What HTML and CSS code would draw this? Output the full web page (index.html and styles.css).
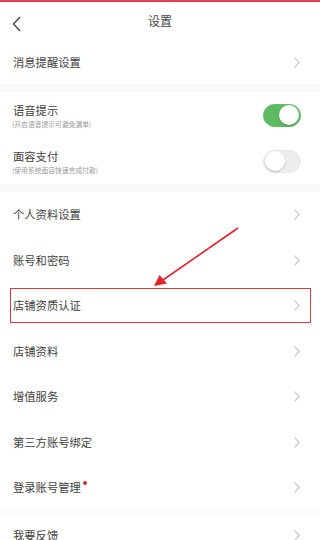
FILE: index.html
```html
<!DOCTYPE html>
<html lang="zh-CN">
<head>
    <meta charset="UTF-8">
    <meta name="viewport" content="width=device-width, initial-scale=1.0">
    <title>设置</title>
    <link rel="stylesheet" href="styles.css">
</head>
<body>
    <!-- Header -->
    <header class="header">
        <span class="back">
            <svg width="9" height="16" viewBox="0 0 9 16"><polyline points="8,1 1.5,8 8,15" fill="none" stroke="#444" stroke-width="1.4"/></svg>
        </span>
        <h1>设置</h1>
    </header>

    <div class="row row-first">
        <span class="label">消息提醒设置</span>
        <svg class="chev" width="6" height="11" viewBox="0 0 6 11"><polyline points="0.7,0.7 5.2,5.5 0.7,10.3" fill="none" stroke="#c4c4c4" stroke-width="1.1"/></svg>
    </div>

    <div class="gap gap-8"></div>

    <!-- Switch rows -->
    <div class="row row-switch">
        <div class="text">
            <span class="label">语音提示</span>
            <span class="sub">(开启语音提示可避免漏单)</span>
        </div>
        <span class="switch on"><span class="knob"></span></span>
    </div>
    <div class="row row-switch">
        <div class="text">
            <span class="label">面容支付</span>
            <span class="sub">(使用系统面容快速完成付款)</span>
        </div>
        <span class="switch"><span class="knob"></span></span>
    </div>

    <div class="gap gap-8"></div>

    <div class="row">
        <span class="label">个人资料设置</span>
        <svg class="chev" width="6" height="11" viewBox="0 0 6 11"><polyline points="0.7,0.7 5.2,5.5 0.7,10.3" fill="none" stroke="#c4c4c4" stroke-width="1.1"/></svg>
    </div>
    <div class="row">
        <span class="label">账号和密码</span>
        <svg class="chev" width="6" height="11" viewBox="0 0 6 11"><polyline points="0.7,0.7 5.2,5.5 0.7,10.3" fill="none" stroke="#c4c4c4" stroke-width="1.1"/></svg>
    </div>
    <div class="row marked">
        <span class="label">店铺资质认证</span>
        <svg class="chev" width="6" height="11" viewBox="0 0 6 11"><polyline points="0.7,0.7 5.2,5.5 0.7,10.3" fill="none" stroke="#c4c4c4" stroke-width="1.1"/></svg>
    </div>
    <div class="row">
        <span class="label">店铺资料</span>
        <svg class="chev" width="6" height="11" viewBox="0 0 6 11"><polyline points="0.7,0.7 5.2,5.5 0.7,10.3" fill="none" stroke="#c4c4c4" stroke-width="1.1"/></svg>
    </div>
    <div class="row">
        <span class="label">增值服务</span>
        <svg class="chev" width="6" height="11" viewBox="0 0 6 11"><polyline points="0.7,0.7 5.2,5.5 0.7,10.3" fill="none" stroke="#c4c4c4" stroke-width="1.1"/></svg>
    </div>
    <div class="row">
        <span class="label">第三方账号绑定</span>
        <svg class="chev" width="6" height="11" viewBox="0 0 6 11"><polyline points="0.7,0.7 5.2,5.5 0.7,10.3" fill="none" stroke="#c4c4c4" stroke-width="1.1"/></svg>
    </div>
    <div class="row">
        <span class="label">登录账号管理<span class="dot"></span></span>
        <svg class="chev" width="6" height="11" viewBox="0 0 6 11"><polyline points="0.7,0.7 5.2,5.5 0.7,10.3" fill="none" stroke="#c4c4c4" stroke-width="1.1"/></svg>
    </div>

    <div class="gap gap-3"></div>

    <div class="row">
        <span class="label">我要反馈</span>
        <svg class="chev" width="6" height="11" viewBox="0 0 6 11"><polyline points="0.7,0.7 5.2,5.5 0.7,10.3" fill="none" stroke="#c4c4c4" stroke-width="1.1"/></svg>
    </div>

    <!-- Annotation arrow -->
    <svg class="arrow" width="320" height="540" viewBox="0 0 320 540">
        <line x1="238" y1="228" x2="163" y2="280" stroke="#e3232c" stroke-width="1.6"/>
        <polygon points="154,286 159.5,275 167,283.5" fill="#e3232c"/>
    </svg>
</body>
</html>
```

FILE: styles.css
```css
/* Reset */
* {
    margin: 0;
    padding: 0;
    box-sizing: border-box;
}

html, body {
    height: 100%;
    overflow: hidden;
}

body {
    font-family: "Noto Sans CJK SC", "Noto Sans", sans-serif;
    background-color: #fff;
    color: #424242;
    position: relative;
    width: 320px;
}

/* Header */
.header {
    height: 40px;
    border-top: 2px solid #e4414d;
    display: flex;
    align-items: center;
    justify-content: center;
    position: relative;
}

.header h1 {
    font-size: 12px;
    font-weight: 400;
    color: #444;
    line-height: 1;
}

.back {
    position: absolute;
    left: 12px;
    top: 14px;
    display: flex;
}

/* Rows */
.row {
    height: 45.5px;
    padding: 0 20px 0 13px;
    display: flex;
    align-items: center;
    justify-content: space-between;
    position: relative;
}

.row-first {
    height: 44px;
}

.row-switch {
    height: 46px;
}

.label {
    font-size: 11.3px;
    line-height: 15px;
    color: #424242;
    position: relative;
}

.text {
    display: flex;
    flex-direction: column;
    padding-top: 2px;
}

.sub {
    font-size: 6.8px;
    line-height: 10px;
    color: #9a9a9a;
    margin-top: 1px;
    margin-left: -1px;
}

.chev {
    flex-shrink: 0;
}

.dot {
    position: absolute;
    right: -6px;
    top: 1px;
    width: 4px;
    height: 4px;
    border-radius: 50%;
    background-color: #d0282e;
}

/* Switch */
.switch {
    width: 38px;
    height: 23px;
    border-radius: 12px;
    background-color: #ededed;
    border: 1px solid #e6e6e6;
    display: flex;
    align-items: center;
    padding: 0 1px;
    margin-right: -1px;
}

.switch .knob {
    width: 20px;
    height: 20px;
    border-radius: 50%;
    background-color: #fff;
    box-shadow: 0 1px 2px rgba(0, 0, 0, 0.2);
}

.switch.on {
    background-color: #5dbc62;
    border-color: #5dbc62;
    justify-content: flex-end;
}

/* Section gaps */
.gap {
    background-color: #f9f9f9;
}

.gap-8 {
    height: 8px;
}

.gap-3 {
    height: 2px;
}

/* Highlighted row frame */
.marked::after {
    content: "";
    position: absolute;
    left: 10px;
    right: 9px;
    top: 5px;
    bottom: 6px;
    border: 1.5px solid #e23a45;
}

/* Annotation */
.arrow {
    position: absolute;
    left: 0;
    top: 0;
    pointer-events: none;
}
```
